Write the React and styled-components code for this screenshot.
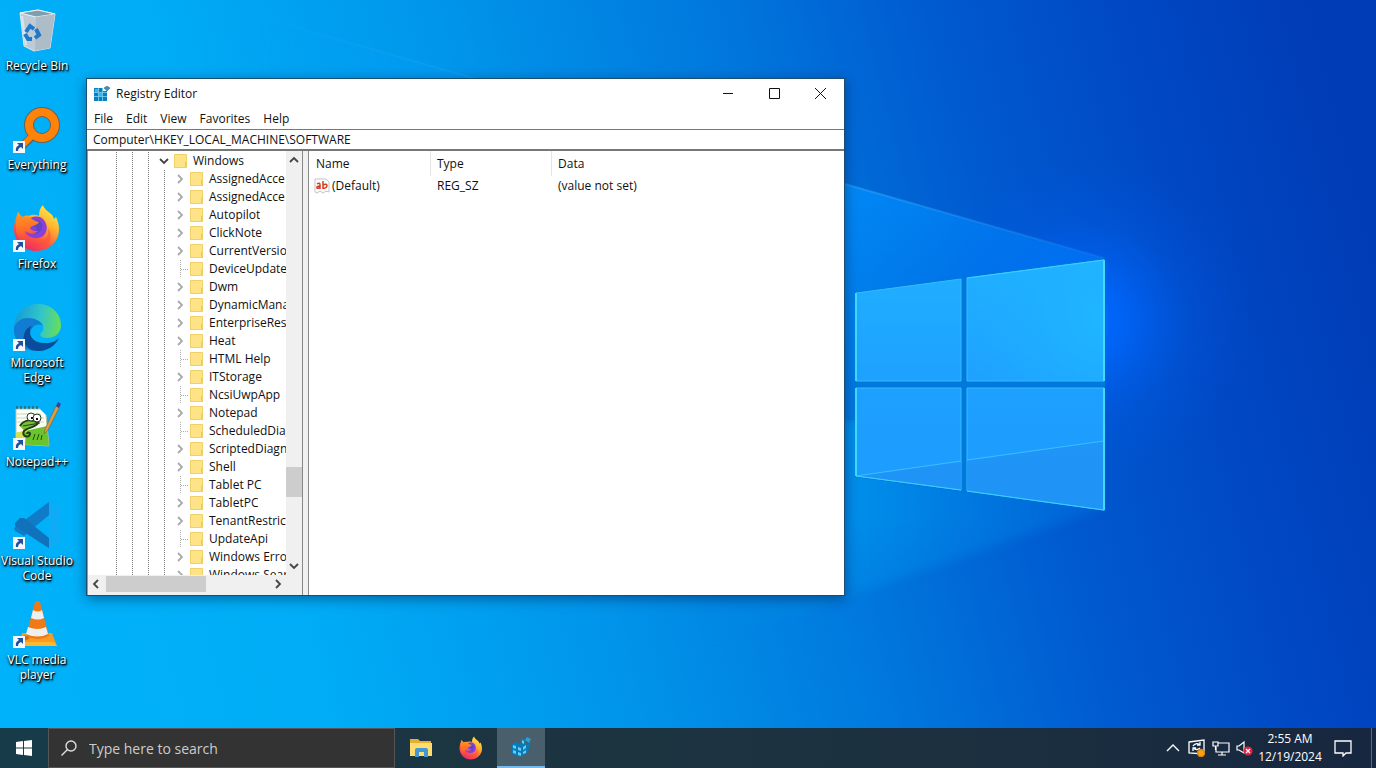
import styled, { createGlobalStyle, css } from "styled-components";

const GlobalStyle = createGlobalStyle`
  * {
    box-sizing: border-box;
  }
  body {
    margin: 0;
    overflow: hidden;
    font-family: "Open Sans", "Noto Sans", sans-serif;
    font-size: 12px;
  }
  button, input {
    font: inherit;
    color: inherit;
    border: 0;
    padding: 0;
    background: none;
  }
`;

const shortcuts = [
  { name: "Recycle Bin", icon: "bin" },
  { name: "Everything", icon: "everything", link: true },
  { name: "Firefox", icon: "firefox", link: true },
  { name: "Microsoft Edge", icon: "edge", link: true },
  { name: "Notepad++", icon: "notepad", link: true },
  { name: "Visual Studio Code", icon: "code", link: true },
  { name: "VLC media player", icon: "vlc", link: true },
];

const menus = ["File", "Edit", "View", "Favorites", "Help"];

const keys = [
  { name: "Windows", depth: 3, open: true, children: true },
  { name: "AssignedAcce", depth: 4, children: true },
  { name: "AssignedAcce", depth: 4, children: true },
  { name: "Autopilot", depth: 4, children: true },
  { name: "ClickNote", depth: 4, children: true },
  { name: "CurrentVersion", depth: 4, children: true },
  { name: "DeviceUpdate", depth: 4 },
  { name: "Dwm", depth: 4, children: true },
  { name: "DynamicMana", depth: 4, children: true },
  { name: "EnterpriseReso", depth: 4, children: true },
  { name: "Heat", depth: 4, children: true },
  { name: "HTML Help", depth: 4 },
  { name: "ITStorage", depth: 4, children: true },
  { name: "NcsiUwpApp", depth: 4 },
  { name: "Notepad", depth: 4, children: true },
  { name: "ScheduledDiag", depth: 4 },
  { name: "ScriptedDiagn", depth: 4, children: true },
  { name: "Shell", depth: 4, children: true },
  { name: "Tablet PC", depth: 4 },
  { name: "TabletPC", depth: 4, children: true },
  { name: "TenantRestrict", depth: 4, children: true },
  { name: "UpdateApi", depth: 4 },
  { name: "Windows Error", depth: 4, children: true },
  { name: "Windows Sear", depth: 4, children: true },
];

const Screen = styled.div`
  position: relative;
  display: flex;
  flex-direction: column;
  height: 100vh;
  overflow: hidden;
  background: #0078d7;
`;

const WallpaperSvg = styled.svg`
  position: absolute;
  inset: 0;
  width: 100%;
  height: 100%;
`;

const Desktop = styled.main`
  position: relative;
  flex: 1;
  min-height: 0;
`;

const IconColumn = styled.div`
  display: flex;
  flex-direction: column;
  width: 74px;
`;

const Shortcut = styled.button`
  display: flex;
  flex-direction: column;
  align-items: center;
  gap: 4px;
  height: 99px;
  padding-top: 6px;
  color: #fff;
  line-height: 15px;
  text-align: center;
  text-shadow: 1px 1px 1px #000, 0 1px 3px #000, 1px 2px 2px rgba(0, 0, 0, 0.6);
  svg {
    flex: none;
  }
`;

const Window = styled.section`
  position: absolute;
  left: 86px;
  top: 78px;
  display: flex;
  flex-direction: column;
  width: 759px;
  height: 518px;
  background: #fff;
  border: 1px solid #1b4f72;
  box-shadow: 0 3px 12px rgba(0, 20, 60, 0.45);
  color: #111;
`;

const TitleBar = styled.header`
  display: flex;
  align-items: center;
  height: 29px;
  padding: 0 1px 0 7px;
  h1 {
    flex: 1;
    margin: 0 0 0 6px;
    font-size: 12px;
    font-weight: 400;
  }
`;

const CaptionButton = styled.button`
  display: grid;
  place-items: center;
  width: 46px;
  height: 29px;
`;

const MenuBar = styled.nav`
  display: flex;
  height: 21px;
  padding-left: 1px;
  button {
    padding: 0 7px 0 6px;
  }
`;

const Address = styled.input`
  height: 22px;
  padding: 0 6px;
  border-top: 1px solid #777;
  border-bottom: 2px solid #777;
  outline: 0;
`;

const Panes = styled.div`
  display: flex;
  flex: 1;
  min-height: 0;
`;

const TreePane = styled.div`
  display: grid;
  grid-template: minmax(0, 1fr) 18px / minmax(0, 1fr) 16px;
  width: 215px;
  padding-bottom: 2px;
  border-left: 1px solid #999;
  background: #f0f0f0;
`;

const Tree = styled.ul`
  margin: 0;
  padding: 1px 0 0 20px;
  list-style: none;
  overflow: hidden;
  background: #fff;
`;

const TreeRow = styled.li`
  display: flex;
  height: 18px;
  line-height: 18px;
  white-space: nowrap;
  svg {
    flex: none;
  }
`;

const dots = css`
  background: repeating-linear-gradient(#777 0 1px, transparent 1px 2px);
`;

const Guide = styled.span`
  flex: none;
  width: 16px;
  &::before {
    content: "";
    display: block;
    width: 1px;
    height: 100%;
    margin-left: 8px;
    ${dots}
  }
`;

const Toggle = styled.button`
  display: grid;
  place-items: center;
  flex: none;
  width: 16px;
  height: 18px;
`;

const Leaf = styled(Guide)`
  display: flex;
  align-items: center;
  opacity: 0.6;
  &::after {
    content: "";
    width: 7px;
    height: 1px;
    background: repeating-linear-gradient(90deg, #777 0 1px, transparent 1px 2px);
  }
`;

const KeyName = styled.span`
  overflow: hidden;
  padding-left: 4px;
`;

const ScrollBar = styled.div`
  display: flex;
  flex-direction: ${(p) => (p.$horizontal ? "row" : "column")};
`;

const ScrollButton = styled.button`
  display: grid;
  place-items: center;
  flex: none;
  width: 16px;
  height: 18px;
`;

const Track = styled.div`
  display: flex;
  flex: 1;
  flex-direction: ${(p) => (p.$horizontal ? "row" : "column")};
`;

const Thumb = styled.div`
  flex: none;
  background: #cdcdcd;
  ${(p) =>
    p.$horizontal
      ? "width: 100px; margin: 1px 0 1px 2px;"
      : "height: 30px; margin-top: auto; margin-bottom: 60px;"}
`;

const Splitter = styled.div`
  width: 7px;
  background: #f0f0f0;
  border: solid #888;
  border-width: 0 1px;
`;

const ListPane = styled.div`
  flex: 1;
  padding-left: 1px;
`;

const ValueTable = styled.table`
  width: 100%;
  border-spacing: 0;
  table-layout: fixed;
  th, td {
    padding: 0 0 0 6px;
    font-weight: 400;
    text-align: left;
  }
  th {
    width: 121px;
    height: 25px;
    border-right: 1px solid #e5e5e5;
  }
  th:last-child {
    width: auto;
    border-right: 0;
  }
  td {
    height: 19px;
  }
  td:first-child {
    padding-left: 4px;
  }
`;

const ValueName = styled.span`
  display: flex;
  align-items: center;
  gap: 2px;
`;

const TaskBar = styled.footer`
  position: relative;
  display: flex;
  height: 40px;
  color: #fff;
  background: linear-gradient(90deg, #173c49 0%, #1c3541 35%, #1c3040 70%, #17273f 100%);
`;

const StartButton = styled.button`
  display: grid;
  place-items: center;
  width: 48px;
`;

const SearchBox = styled.label`
  display: flex;
  align-items: center;
  gap: 12px;
  width: 347px;
  margin-right: 2px;
  padding-left: 12px;
  background: #333;
  border: 1px solid #555;
  input {
    flex: 1;
    min-width: 0;
    font-size: 14px;
    outline: 0;
  }
  input::placeholder {
    color: #ccc;
    opacity: 1;
  }
`;

const TaskButton = styled.button`
  display: grid;
  place-items: center;
  width: 48px;
  margin-right: 2px;
  ${(p) =>
    p.$active &&
    css`
      background: #49606c;
      border-bottom: 2px solid #76b9ed;
    `}
`;

const Tray = styled.div`
  display: flex;
  align-items: center;
  margin-left: auto;
`;

const TrayButton = styled.button`
  display: grid;
  place-items: center;
  width: 24px;
  height: 40px;
`;

const Clock = styled.time`
  width: 66px;
  line-height: 18px;
  text-align: center;
`;

const ActionButton = styled(TrayButton)`
  width: 40px;
`;

const ShowDesktop = styled.button`
  width: 5px;
  height: 40px;
  margin-left: 8px;
  border-left: 1px solid #5c6b7c;
`;

const Wallpaper = () => (
  <WallpaperSvg viewBox="0 0 1376 768" preserveAspectRatio="none" aria-hidden="true">
    <defs>
      <linearGradient id="base" gradientUnits="userSpaceOnUse" x1="0" y1="600" x2="1376" y2="250">
        <stop offset="0" stopColor="#00b2fa" />
        <stop offset="0.2" stopColor="#00adf6" />
        <stop offset="0.4" stopColor="#0096eb" />
        <stop offset="0.6" stopColor="#0076dc" />
        <stop offset="0.74" stopColor="#005ad0" />
        <stop offset="0.87" stopColor="#0048c4" />
        <stop offset="1" stopColor="#003cb6" />
      </linearGradient>
      <radialGradient id="glow" gradientUnits="userSpaceOnUse" cx="1085" cy="320" r="165">
        <stop offset="0" stopColor="#006cff" />
        <stop offset="0.25" stopColor="#0068ff" stopOpacity="0.75" />
        <stop offset="0.6" stopColor="#0060f0" stopOpacity="0.28" />
        <stop offset="1" stopColor="#0058e0" stopOpacity="0" />
      </radialGradient>
      <linearGradient id="beam" gradientUnits="userSpaceOnUse" x1="200" y1="0" x2="1104" y2="0">
        <stop offset="0" stopColor="#00a8ff" stopOpacity="0" />
        <stop offset="0.7" stopColor="#0092ff" stopOpacity="0.75" />
        <stop offset="1" stopColor="#0082ff" stopOpacity="0.6" />
      </linearGradient>
      <linearGradient id="beamLine" gradientUnits="userSpaceOnUse" x1="200" y1="0" x2="1104" y2="0">
        <stop offset="0" stopColor="#4cb8ff" stopOpacity="0" />
        <stop offset="0.75" stopColor="#4cb8ff" stopOpacity="0.35" />
        <stop offset="1" stopColor="#4cb8ff" stopOpacity="0.1" />
      </linearGradient>
      <linearGradient id="lowBeam" gradientUnits="userSpaceOnUse" x1="700" y1="0" x2="1104" y2="0">
        <stop offset="0" stopColor="#0098f0" stopOpacity="0" />
        <stop offset="0.4" stopColor="#0094ec" stopOpacity="0.8" />
        <stop offset="1" stopColor="#006cdc" stopOpacity="0.5" />
      </linearGradient>
      <linearGradient id="fade" x1="0" y1="0" x2="0" y2="1">
        <stop offset="0" stopColor="#fff" />
        <stop offset="0.4" stopColor="#fff" />
        <stop offset="1" stopColor="#fff" stopOpacity="0" />
      </linearGradient>
      <mask id="upperFade" maskUnits="userSpaceOnUse" x="0" y="0" width="1376" height="768">
        <rect width="1376" height="480" fill="url(#fade)" />
      </mask>
      <mask id="lowerFade" maskUnits="userSpaceOnUse" x="0" y="0" width="1376" height="768">
        <rect y="420" width="1376" height="240" fill="url(#fade)" />
      </mask>
      <linearGradient id="pane" gradientUnits="userSpaceOnUse" x1="0" y1="260" x2="0" y2="510">
        <stop offset="0" stopColor="#20b0ff" />
        <stop offset="0.5" stopColor="#1ea0ff" />
        <stop offset="1" stopColor="#1c9cff" />
      </linearGradient>
      <radialGradient id="shine" gradientUnits="userSpaceOnUse" cx="1104" cy="320" r="150">
        <stop offset="0" stopColor="#1fb8ff" stopOpacity="0.9" />
        <stop offset="1" stopColor="#1fb0ff" stopOpacity="0" />
      </radialGradient>
      <filter id="soft" x="-10%" y="-10%" width="120%" height="120%">
        <feGaussianBlur stdDeviation="5" />
      </filter>
    </defs>
    <rect width="1376" height="768" fill="url(#base)" />
    <rect width="1376" height="768" fill="url(#glow)" />
    <path d="M1104 258L200 0H0V500H1104Z" fill="url(#beam)" mask="url(#upperFade)" />
    <path d="M1104 258L200 0" stroke="url(#beamLine)" strokeWidth="2" />
    <g mask="url(#lowerFade)">
      <path d="M700 420H1098V510L840 600L700 649Z" fill="url(#lowBeam)" filter="url(#soft)" />
    </g>
    <path d="M855 292L1105 258V511L855 477Z" fill="#0078dc" />
    <g fill="url(#pane)" stroke="#34bcff" strokeWidth="1">
      <path d="M856 293L961 279V381H856Z" />
      <path d="M967 278L1104 260V381H967Z" />
      <path d="M856 388H961V490L856 476Z" />
      <path d="M967 388H1104V510L967 491Z" />
    </g>
    <path d="M967 278L1104 260V381H967Z" fill="url(#shine)" />
    <path d="M856 476L961 462V490ZM967 461L1104 441V510L967 491Z" fill="#2290f4" opacity="0.75" />
    <path d="M856 476L961 461M967 460L1104 441" stroke="#37c0ff" fill="none" />
    <path d="M856 293V381M856 388V476M1104 510V388M1104 381V260" stroke="#3fdcff" strokeWidth="2" fill="none" />
    <path d="M856 476L961 490M967 491L1104 510M1104 260L967 278" stroke="#3cd0ff" fill="none" />
  </WallpaperSvg>
);

const FirefoxArt = () => (
  <>
    <defs>
      <linearGradient id="ffBody" x1="0.8" y1="0" x2="0.2" y2="1">
        <stop offset="0" stopColor="#fff04a" />
        <stop offset="0.35" stopColor="#ffb02e" />
        <stop offset="0.65" stopColor="#ff5a3d" />
        <stop offset="1" stopColor="#e9206f" />
      </linearGradient>
      <linearGradient id="ffFox" x1="0.3" y1="0" x2="0.4" y2="1">
        <stop offset="0" stopColor="#ff9a1f" />
        <stop offset="0.5" stopColor="#ff6a2c" />
        <stop offset="1" stopColor="#f5304f" stopOpacity="0" />
      </linearGradient>
    </defs>
    <path d="M5 8C7 10 8 12 9 13c2-1 5-2 7-1C19 10 24 11 26 12c0-5 1-8 4-11 1 4 5 6 8 9 2 1 2 3 3 5l2-2c3 6 4 13 2 19-3 9-12 15-22 15C11 47 1 37 1 25 1 18 3 14 5 8Z" fill="url(#ffBody)" />
    <path d="M30 15c5 5 5 13 0 17-6 4-14 2-17-3-2-4-1-8 1-11 4-6 11-7 16-3Z" fill="#8a3fdc" />
    <path d="M24 16c4 1 6 4 5 8-1 5-7 7-11 4 3 0 5-2 6-4-3-1-5-4-8-4 1-3 4-5 8-4Z" fill="#5b45c9" />
    <path d="M5 8c3 5 5 6 11 5 4 3 6 4 10 5-2 4-7 3-9 6 1 3 5 3 8 3-5 5-10 2-13 0-1 7 3 12 11 12 9 0 14-8 12-15 6 9 2 20-12 21C12 44 4 35 3 26 2 19 4 13 5 8Z" fill="url(#ffFox)" />
  </>
);

const art = {
  bin: (
    <>
      <path d="M7 7L25 4L42 8L37 42L21 45L11 40Z" fill="#bccbd6" stroke="#dde9f0" />
      <path d="M7 7L23 11L42 8L25 4Z" fill="#7f9dae" stroke="#eef5f8" />
      <path d="M23 11L42 8L37 42L22 45Z" fill="#a9b8c3" opacity="0.8" />
      <path d="M9 10L13 39" stroke="#e8f1f6" strokeWidth="2" opacity="0.7" />
      <g fill="none" stroke="#2078c8" strokeWidth="4">
        <path d="M13 26L17 20L21 23" />
        <path d="M23 23L26 29L22 32" />
        <path d="M12 28L15 33H19" />
      </g>
    </>
  ),
  everything: (
    <>
      <circle cx="29" cy="20" r="13" fill="none" stroke="#66625a" strokeWidth="10" />
      <path d="M20 31L7 43" stroke="#66625a" strokeWidth="8" />
      <circle cx="29" cy="20" r="13" fill="none" stroke="#ff8209" strokeWidth="8" />
      <path d="M21 29L7 43" stroke="#ff8209" strokeWidth="6" />
    </>
  ),
  firefox: <FirefoxArt />,
  edge: (
    <>
      <defs>
        <linearGradient id="edgeTop" x1="0" y1="0.5" x2="1" y2="0.6">
          <stop offset="0" stopColor="#169bd5" />
          <stop offset="0.55" stopColor="#31c5cb" />
          <stop offset="1" stopColor="#68df55" />
        </linearGradient>
      </defs>
      <path d="M1 25C2 10 12 1 25 1c14 0 23 10 23 21 0 9-7 13-14 13-6 0-8-3-6-5 2-2 3-4 2-7-2-5-7-7-13-7C8 16 3 20 1 25Z" fill="url(#edgeTop)" />
      <path d="M1 25c2-7 8-10 14-10 7 0 13 3 15 8-4-3-10-1-12 4-4 10 4 18 14 20-4 2-7 1-10 1C9 47 0 37 1 25Z" fill="#127bd2" />
      <path d="M17 27c-1 8 6 14 16 13 6 0 10-2 13-5-3 7-11 13-21 13-11 0-16-9-14-16 1-5 4-8 8-9-1 1-2 2-2 4Z" fill="#0a4c99" />
    </>
  ),
  notepad: (
    <>
      <path d="M3 7H27L33 13L36 44L3 42Z" fill="#fcfff4" stroke="#b7c4a4" />
      <path d="M3 31L34 24L36 44L3 42Z" fill="#6cc42c" />
      <path d="M3 31L14 28L12 42H3Z" fill="#d6e04a" />
      <path d="M4 12H28M4 16H31M4 20H31" stroke="#c9d4cc" />
      <path d="M4 7V4M8 7V4M12 7V4M16 7V4M20 7V4M24 7V4" stroke="#33413c" />
      <path d="M7 24C11 17 20 17 25 21C22 26 15 25 11 29C8 34 16 37 17 32C17 30 14 30 14 32" fill="#78bf36" stroke="#203d16" strokeWidth="2" />
      <circle cx="18" cy="15" r="4" fill="#fff" stroke="#223c1d" />
      <circle cx="24" cy="16" r="4" fill="#fff" stroke="#223c1d" />
      <path d="M19 15V17M24 16V18" stroke="#111" strokeWidth="2" />
      <path d="M10 24L27 21M20 38L22 32M24 38L26 32M28 38L29 33" stroke="#23481a" fill="none" />
      <path d="M32 27L43 4L46 6L35 28L31 32Z" fill="#e39a45" stroke="#765c40" strokeWidth="0.6" />
      <path d="M43 4L45 0L48 2L46 6Z" fill="#34459c" />
    </>
  ),
  code: (
    <>
      <path d="M36 1V14L11 35L2 30L1 27Z" fill="#107cc8" />
      <path d="M2 22L7 17L11 17L36 37V47L31 44L2 25Z" fill="#0f72bb" />
      <path d="M36 1L46 5V42L36 47Z" fill="#25a4ee" opacity="0.35" />
    </>
  ),
  vlc: (
    <>
      <path d="M9 33H39L44 46H6Z" fill="#f79b22" />
      <path d="M6 46L9 42H41L44 46Z" fill="#ffb82a" />
      <path d="M22 2Q25 0 27 2L36 36Q25 42 13 36Z" fill="#ee7915" />
      <path d="M20 10Q25 13 29 10L31 18Q25 21 18 18Z" fill="#edf0ef" />
      <path d="M15 27Q25 31 33 27L35 34Q25 39 13 34Z" fill="#edf0ef" />
      <path d="M6 44L11 35L17 38Z" fill="#d96510" />
    </>
  ),
};

const ShortcutArt = ({ icon, link }) => (
  <svg width="48" height="48" viewBox="0 0 48 48" aria-hidden="true">
    {art[icon]}
    {link && (
      <>
        <path d="M0 36H12V48H0Z" fill="#f5f8fb" />
        <path d="M4 38H10V44L8 42Q5 43 5 46H3Q2 42 6 40Z" fill="#224f9e" />
      </>
    )}
  </svg>
);

const Folder = () => (
  <svg width="17" height="18" viewBox="0 0 17 18" aria-hidden="true">
    <path d="M2 2H14V16H2Z" fill="#ffe387" />
    <path d="M13 10L15 9V16H2V15H13Z" fill="#eec95c" />
    <path d="M2.5 2.5H14.5V15.5H2.5Z" fill="none" stroke="#f0d067" />
  </svg>
);

const paths = {
  up: "M1 7L5 3L9 7",
  down: "M1 3L5 7L9 3",
  left: "M7 1L3 5L7 9",
  right: "M3 1L7 5L3 9",
};

const Chevron = ({ to, color = "#444" }) => (
  <svg width="10" height="10" viewBox="0 0 10 10" aria-hidden="true">
    <path d={paths[to]} fill="none" stroke={color} strokeWidth="1.8" />
  </svg>
);

const KeyRow = ({ item }) => (
  <TreeRow>
    {Array.from({ length: item.depth }, (_, i) => (
      <Guide key={i} />
    ))}
    {item.children ? (
      <Toggle aria-label={item.name}>
        <Chevron to={item.open ? "down" : "right"} color={item.open ? "#444" : "#aaa"} />
      </Toggle>
    ) : (
      <Leaf />
    )}
    <Folder />
    <KeyName>{item.name}</KeyName>
  </TreeRow>
);

const RegistryEditor = () => (
  <Window>
    <TitleBar>
      <svg width="16" height="16" viewBox="0 0 16 16" aria-hidden="true">
        <path d="M0 2H9V5H13V15H0Z" fill="#0a7fc1" />
        <path d="M0 6.5H13M0 10.5H13M4.5 2V15M8.5 2V15" stroke="#7fd3f3" strokeWidth="0.8" />
        <path d="M1 3H4V6H1ZM5 7H8V10H5Z" fill="#37b7ec" />
        <path d="M13 0L16 2L13 5L10 2Z" fill="#3f91b8" stroke="#26617e" strokeWidth="0.5" />
      </svg>
      <h1>Registry Editor</h1>
      <CaptionButton aria-label="Minimize">
        <svg width="11" height="11" stroke="#111">
          <path d="M0 5.5H10" />
        </svg>
      </CaptionButton>
      <CaptionButton aria-label="Maximize">
        <svg width="11" height="11" stroke="#111" fill="none">
          <path d="M0.5 0.5H10.5V10.5H0.5Z" />
        </svg>
      </CaptionButton>
      <CaptionButton aria-label="Close">
        <svg width="11" height="11" stroke="#111">
          <path d="M0 0L11 11M11 0L0 11" />
        </svg>
      </CaptionButton>
    </TitleBar>
    <MenuBar>
      {menus.map((m) => (
        <button key={m}>{m}</button>
      ))}
    </MenuBar>
    <Address aria-label="Address" defaultValue="Computer\HKEY_LOCAL_MACHINE\SOFTWARE" />
    <Panes>
      <TreePane>
        <Tree>
          {keys.map((k, i) => (
            <KeyRow key={i} item={k} />
          ))}
        </Tree>
        <ScrollBar>
          <ScrollButton aria-label="Scroll up">
            <Chevron to="up" />
          </ScrollButton>
          <Track>
            <Thumb />
          </Track>
          <ScrollButton aria-label="Scroll down">
            <Chevron to="down" />
          </ScrollButton>
        </ScrollBar>
        <ScrollBar $horizontal>
          <ScrollButton aria-label="Scroll left">
            <Chevron to="left" />
          </ScrollButton>
          <Track $horizontal>
            <Thumb $horizontal />
          </Track>
          <ScrollButton aria-label="Scroll right">
            <Chevron to="right" />
          </ScrollButton>
        </ScrollBar>
      </TreePane>
      <Splitter />
      <ListPane>
        <ValueTable>
          <thead>
            <tr>
              <th>Name</th>
              <th>Type</th>
              <th>Data</th>
            </tr>
          </thead>
          <tbody>
            <tr>
              <td>
                <ValueName>
                  <svg width="16" height="16" viewBox="0 0 16 16" aria-hidden="true">
                    <path d="M1 1H12L15 4V14L12 13L9 15L6 13L3 15L1 14Z" fill="#fff" stroke="#c4c4c4" />
                    <g fill="none" stroke="#d83b22" strokeWidth="1.5">
                      <path d="M3 6Q6 4 6 7V11M6 8Q2 8 3 10Q4 11 6 9" />
                      <path d="M9 3V11M9 7Q13 5 13 8Q12 11 9 10" />
                    </g>
                  </svg>
                  (Default)
                </ValueName>
              </td>
              <td>REG_SZ</td>
              <td>(value not set)</td>
            </tr>
          </tbody>
        </ValueTable>
      </ListPane>
    </Panes>
  </Window>
);

const App = () => (
  <>
    <GlobalStyle />
    <Screen>
      <Wallpaper />
      <Desktop>
        <IconColumn>
          {shortcuts.map((s) => (
            <Shortcut key={s.name}>
              <ShortcutArt icon={s.icon} link={s.link} />
              <span>{s.name}</span>
            </Shortcut>
          ))}
        </IconColumn>
        <RegistryEditor />
      </Desktop>
      <TaskBar>
        <StartButton aria-label="Start">
          <svg width="16" height="16" viewBox="0 0 16 16" fill="#fff">
            <path d="M0 2L7 1V7.5H0ZM8 1L16 0V7.5H8ZM0 8.5H7V15L0 14ZM8 8.5H16V16L8 15Z" />
          </svg>
        </StartButton>
        <SearchBox>
          <svg width="16" height="16" viewBox="0 0 16 16" fill="none" stroke="#ddd" strokeWidth="1.4" aria-hidden="true">
            <circle cx="10" cy="6" r="5" />
            <path d="M6.5 9.5L0.5 15.5" />
          </svg>
          <input type="text" aria-label="Search" placeholder="Type here to search" />
        </SearchBox>
        <TaskButton aria-label="File Explorer">
          <svg width="24" height="20" viewBox="0 0 24 20">
            <path d="M1 1H9L11 3H22V17H1Z" fill="#e8ad31" />
            <path d="M1 5H23V18H1Z" fill="#ffdc70" />
            <path d="M6 19V12Q6 10 8 10H17Q19 10 19 12V19H15V14H10V19Z" fill="#4199d4" />
          </svg>
        </TaskButton>
        <TaskButton aria-label="Firefox">
          <svg width="24" height="24" viewBox="0 0 48 48">
            <FirefoxArt />
          </svg>
        </TaskButton>
        <TaskButton $active aria-label="Registry Editor">
          <svg width="24" height="24" viewBox="0 0 24 24">
            <path d="M3 9L8 7L9 9L12 8V3L17 5V10L21 8L19 17L11 22L3 19Z" fill="#087ab8" />
            <path d="M4 10L7 11V14L4 13ZM4 15L7 16V19L4 18ZM9 12L12 13V16L9 15ZM9 17L12 18V21L9 20ZM14 12L17 10V13L14 15ZM14 17L17 15V18L14 19ZM13 5L15 6V9L13 8Z" fill="#62cdf5" />
            <path d="M18 2L22 4L20 8L16 5Z" fill="#23a1dc" />
          </svg>
        </TaskButton>
        <Tray>
          <TrayButton aria-label="Show hidden icons">
            <svg width="14" height="10" fill="none" stroke="#fff" strokeWidth="1.4">
              <path d="M1 8L7 2L13 8" />
            </svg>
          </TrayButton>
          <TrayButton aria-label="Windows Update">
            <svg width="18" height="18" viewBox="0 0 18 18" fill="none" stroke="#fff" strokeWidth="1.3">
              <path d="M1 3L16 1V15L1 14Z" />
              <path d="M5 7Q8 3 12 6M12 3V6H9M12 9Q9 12 5 9M5 12V9H8" />
              <circle cx="13" cy="14" r="3.5" fill="#ffa014" stroke="#dd830b" />
            </svg>
          </TrayButton>
          <TrayButton aria-label="Network">
            <svg width="18" height="16" viewBox="0 0 18 16" fill="none" stroke="#fff" strokeWidth="1.2">
              <path d="M6 3H17V12H4V7M10 12V15M6 15H14" />
              <path d="M1 2H6V6H1ZM3.5 6V10" />
            </svg>
          </TrayButton>
          <TrayButton aria-label="Volume">
            <svg width="18" height="16" viewBox="0 0 18 16" fill="none" stroke="#fff" strokeWidth="1.2">
              <path d="M1 6H3L8 2V13L3 10H1Z" />
              <circle cx="12" cy="11" r="4" fill="#dc2545" stroke="#dc2545" />
              <path d="M10 9L14 13M14 9L10 13" />
            </svg>
          </TrayButton>
          <Clock>
            2:55 AM
            <br />
            12/19/2024
          </Clock>
          <ActionButton aria-label="Notifications">
            <svg width="18" height="18" viewBox="0 0 18 18" fill="none" stroke="#fff" strokeWidth="1.3">
              <path d="M1 2H17V14H12L9 17V14H1Z" />
            </svg>
          </ActionButton>
          <ShowDesktop aria-label="Show desktop" />
        </Tray>
      </TaskBar>
    </Screen>
  </>
);

export default App;
